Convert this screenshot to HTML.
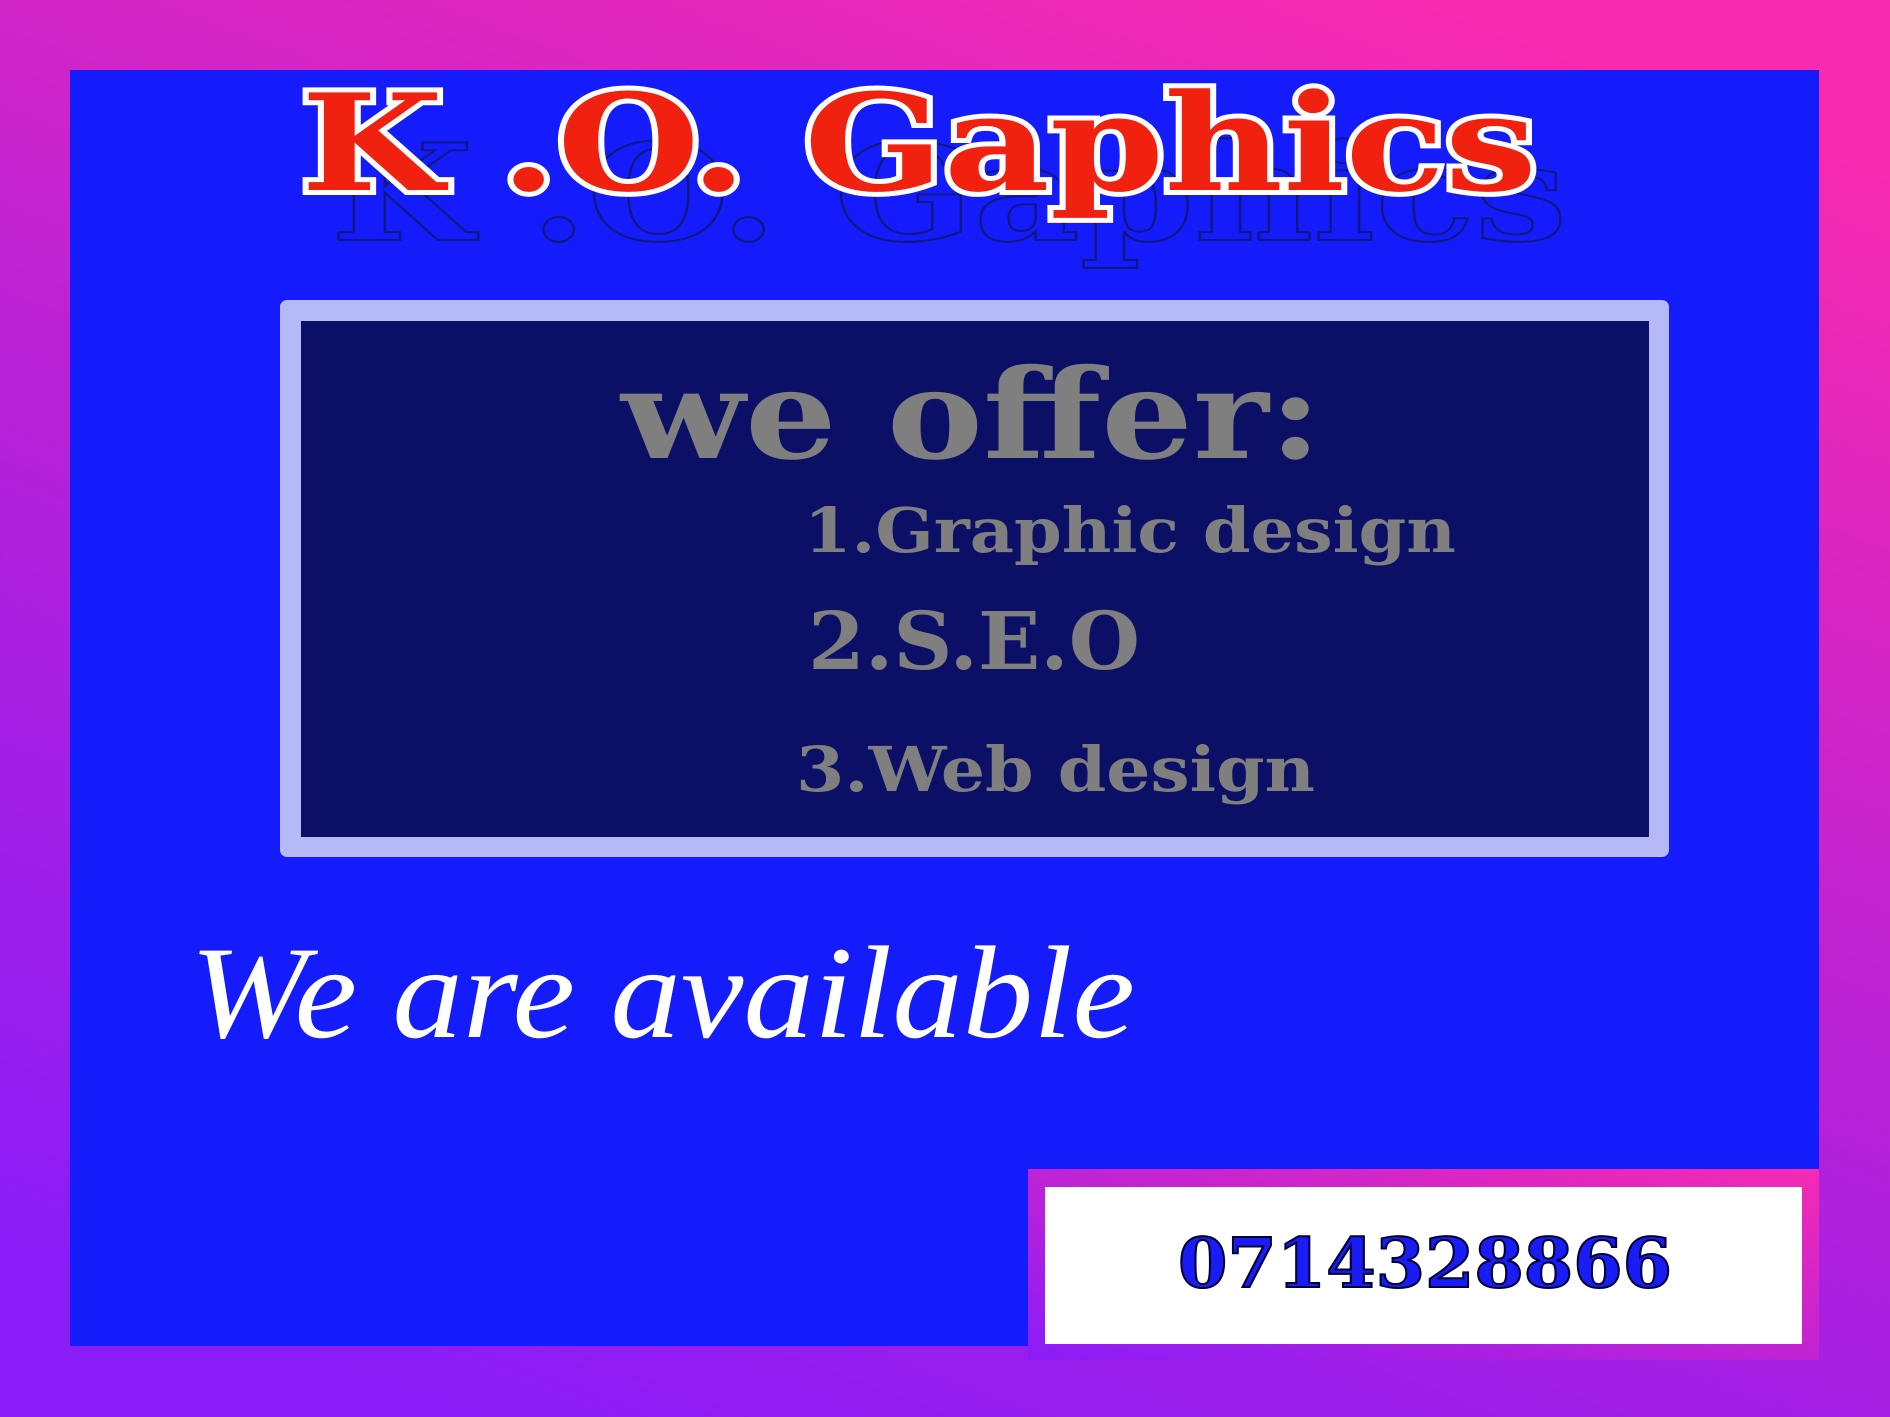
<!DOCTYPE html>
<html><head><meta charset="utf-8"><style>
html,body{margin:0;padding:0;width:1890px;height:1417px;overflow:hidden}
svg{display:block}
</style></head><body>
<svg width="1890" height="1417" viewBox="0 0 1890 1417" xmlns="http://www.w3.org/2000/svg">
<defs>
<linearGradient id="bg" x1="0.25" y1="1" x2="0.75" y2="0">
<stop offset="0" stop-color="#8a1cf7"/>
<stop offset="0.5" stop-color="#b822d6"/>
<stop offset="1" stop-color="#f72ab0"/>
</linearGradient>
<linearGradient id="pb" x1="0" y1="1" x2="1" y2="0">
<stop offset="0" stop-color="#8a1cf7"/>
<stop offset="1" stop-color="#f52ab2"/>
</linearGradient>
</defs>
<rect width="1890" height="1417" fill="url(#bg)"/>
<rect x="70" y="70" width="1749" height="1276" fill="#141cfb"/>
<text x="331" y="240" font-family="DejaVu Serif, serif" font-weight="bold" font-size="134" fill="none" stroke="#101880" stroke-width="2" textLength="1236" lengthAdjust="spacingAndGlyphs">K .O. Gaphics</text>
<text x="301" y="190" font-family="DejaVu Serif, serif" font-weight="bold" font-size="134" fill="#f0210f" stroke="#ffffff" stroke-width="10" paint-order="stroke" textLength="1236" lengthAdjust="spacingAndGlyphs">K .O. Gaphics</text>
<rect x="280" y="300" width="1389" height="557" rx="7" fill="#b6b9f7"/>
<rect x="301" y="321" width="1348" height="516" fill="#0c0f66"/>
<text x="621" y="458" font-family="DejaVu Serif, serif" font-weight="bold" font-size="124" fill="#7f7f7f" textLength="701" lengthAdjust="spacingAndGlyphs">we offer:</text>
<text x="804" y="552" font-family="DejaVu Serif, serif" font-weight="bold" font-size="62" fill="#7f7f7f" textLength="652" lengthAdjust="spacingAndGlyphs">1.Graphic design</text>
<text x="808" y="669" font-family="DejaVu Serif, serif" font-weight="bold" font-size="80" fill="#7f7f7f" textLength="332" lengthAdjust="spacingAndGlyphs">2.S.E.O</text>
<text x="796" y="791" font-family="DejaVu Serif, serif" font-weight="bold" font-size="62" fill="#7f7f7f" textLength="519" lengthAdjust="spacingAndGlyphs">3.Web design</text>
<text x="190" y="1037" font-family="Liberation Serif, serif" font-style="italic" font-size="132" fill="#ffffff" textLength="945" lengthAdjust="spacingAndGlyphs">We are available</text>
<rect x="1028" y="1169" width="791" height="191" fill="url(#pb)"/>
<rect x="1045" y="1187" width="757" height="157" fill="#ffffff"/>
<text x="1178" y="1287" font-family="DejaVu Serif, serif" font-weight="bold" font-size="68" fill="#1a1cf5" stroke="#000033" stroke-width="2" textLength="494" lengthAdjust="spacingAndGlyphs">0714328866</text>
</svg>
</body></html>
